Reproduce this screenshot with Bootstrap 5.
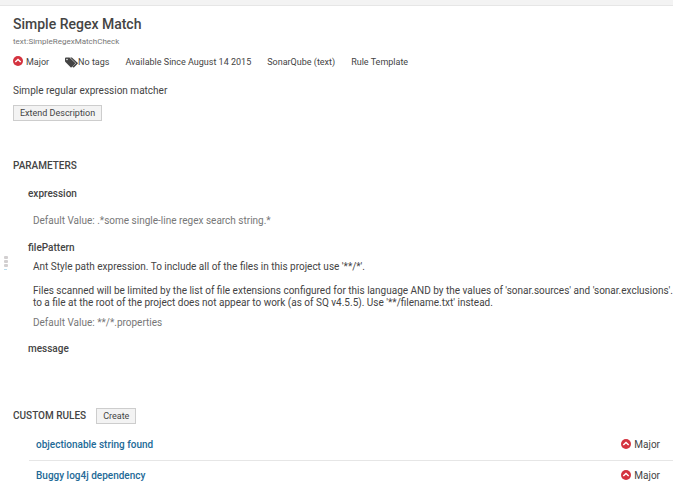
<!DOCTYPE html>
<html lang="en">
<head>
<meta charset="utf-8">
<meta name="viewport" content="width=device-width, initial-scale=1">
<title>Simple Regex Match</title>
<link href="https://cdn.jsdelivr.net/npm/bootstrap@5.3.0/dist/css/bootstrap.min.css" rel="stylesheet">
<style>
body { font: 10px/12px Roboto, "Liberation Sans", sans-serif; color: #444; overflow-x: hidden; }
.top-strip { height: 6px; background: #f3f3f3; border-bottom: 1px solid #e6e6e6; }
.rule-page { padding: 10px 0 0 13px; }
.rule-title { font-size: 14px; line-height: 16px; font-weight: 500; margin: 0; }
.rule-key { font-size: 8px; line-height: 12px; color: #777; margin-top: 4px; }
.rule-meta { font-size: 9px; gap: 16px; margin: 8px 0 17px; }
.rule-btn { font-size: 9px; line-height: 14px; padding: 0 6px; color: #444; background: #f3f3f3; border: 1px solid #cdcdcd; border-radius: 0; }
.section-title { font-size: 10px; line-height: 12px; font-weight: 500; margin: 0; text-transform: uppercase; }
.params { margin-top: 39px; }
.param-list { margin: 16px 0 0 15px; }
.param-list dt { font-weight: 500; }
.param-list dd { margin: 0 0 0 5px; white-space: nowrap; }
.param-list .default-value { color: #777; }
.param-list .exp-default { margin: 15px 0 15px 5px; }
.param-list .param-text { margin: 7px 0 8px 5px; }
.param-list .default-value + dt { margin-top: 14px; }
.customs { margin-top: 53px; }
.create-btn { margin-left: 10px; }
.custom-list { margin: 6px 0 0 16px; }
.custom-list li { padding: 9px 13px 9px 7px; }
.custom-list li + li { border-top: 1px solid #e6e6e6; }
.custom-list a { color: #236a97; font-weight: 500; }
.severity svg { width: 10px; height: 10px; margin: 0 3px 2px 0; }
.tags svg { width: 13px; height: 11px; }
.handle { left: 4px; top: 256px; width: 4px; color: #d2cfd0; }
</style>
</head>
<body>
<div class="top-strip"></div>
<svg class="handle position-absolute" viewBox="0 0 4 15" height="15" aria-hidden="true"><g fill="currentColor"><rect width="4" height="3" rx="1"/><rect y="4" width="4" height="3" rx="1"/><rect y="8" width="4" height="3" rx="1"/></g><path d="M0 13.500h3" stroke="#b9dcee"/></svg>
<svg class="d-none" aria-hidden="true">
<symbol id="major" viewBox="0 0 10 10"><circle cx="5" cy="5" r="5" fill="#d4333f"/><path d="M2.300 6 5 3.500 7.700 6" fill="none" stroke="#fff" stroke-width="1.500"/></symbol>
</svg>
<main class="rule-page">
<h1 class="rule-title">Simple Regex Match</h1>
<div class="rule-key">text:SimpleRegexMatchCheck</div>
<ul class="rule-meta list-unstyled d-flex">
<li class="severity d-flex align-items-center"><svg><use href="#major"/></svg>Major</li>
<li class="tags d-flex align-items-center"><svg viewBox="0 0 13 11" fill="#444" aria-hidden="true"><path fill-rule="evenodd" d="M0 1.500Q0 .5 1 .5h3.500L10 5.700q.5.500 0 1L6.600 10.200q-.5.500-1 0L.4 5.100Q0 4.700 0 4zM2 1.800a.7.7 0 1 0 .01 0z"/><path d="M5.100.5h1.800L12.600 5.700q.5.500 0 1L9.200 10.200q-.6.500-1.200 0l-.9-.4 3.400-3.100q.5-.5 0-1z"/></svg>No tags</li>
<li>Available Since August 14 2015</li>
<li>SonarQube (text)</li>
<li>Rule Template</li>
</ul>
<p class="mb-2">Simple regular expression matcher</p>
<button type="button" class="btn rule-btn d-block">Extend Description</button>
<section class="params">
<h2 class="section-title">Parameters</h2>
<dl class="param-list">
<dt>expression</dt>
<dd class="default-value exp-default">Default Value: .*some single-line regex search string.*</dd>
<dt>filePattern</dt>
<dd class="param-text">Ant Style path expression. To include all of the files in this project use '**/*'.<br><br>Files scanned will be limited by the list of file extensions configured for this language AND by the values of 'sonar.sources' and 'sonar.exclusions'.<br>to a file at the root of the project does not appear to work (as of SQ v4.5.5). Use '**/filename.txt' instead.</dd>
<dd class="default-value">Default Value: **/*.properties</dd>
<dt>message</dt>
</dl>
</section>
<section class="customs">
<div class="d-flex align-items-center">
<h2 class="section-title">Custom Rules</h2>
<button type="button" class="btn rule-btn create-btn">Create</button>
</div>
<ul class="custom-list list-unstyled">
<li class="d-flex justify-content-between"><a href="#" class="text-decoration-none">objectionable string found</a><span class="severity d-flex align-items-center"><svg><use href="#major"/></svg>Major</span></li>
<li class="d-flex justify-content-between"><a href="#" class="text-decoration-none">Buggy log4j dependency</a><span class="severity d-flex align-items-center"><svg><use href="#major"/></svg>Major</span></li>
</ul>
</section>
</main>
<script src="https://cdn.jsdelivr.net/npm/bootstrap@5.3.0/dist/js/bootstrap.bundle.min.js"></script>
</body>
</html>
